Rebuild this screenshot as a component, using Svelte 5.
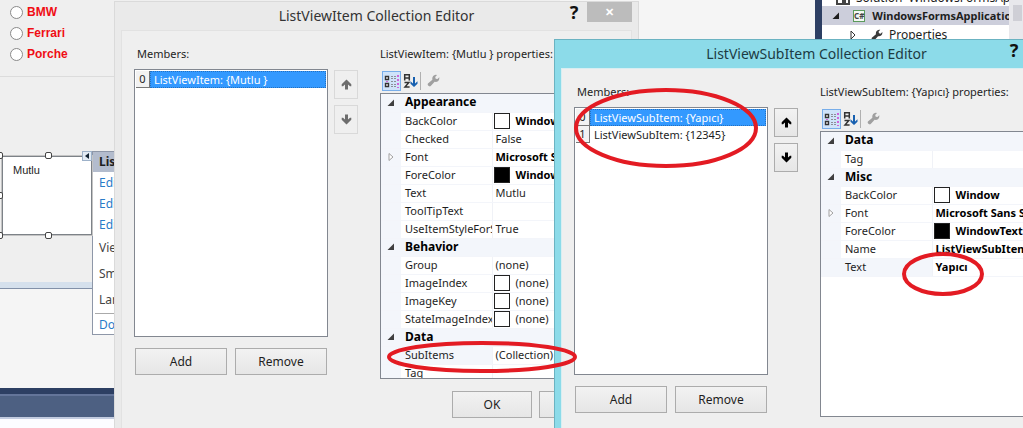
<script>
  let makes = ["BMW", "Ferrari", "Porche"];
  let make = $state("");

  let tasks = [
    { text: "Edit Items...", link: true },
    { text: "Edit Columns...", link: true },
    { text: "Edit Groups...", link: true },
    { text: "View:" },
    { text: "Small ImageList:" },
    { text: "Large ImageList:" },
  ];

  let handles = ["nw", "n", "w", "sw", "s"];

  let itemEditor = $state({
    id: "item",
    title: "ListViewItem Collection Editor",
    heading: "ListViewItem: {Mutlu } properties:",
    members: ["ListViewItem: {Mutlu }"],
    selected: 0,
    active: false,
    groups: [
      {
        name: "Appearance",
        rows: [
          { name: "BackColor", value: "Window", swatch: "white", bold: true },
          { name: "Checked", value: "False" },
          { name: "Font", value: "Microsoft Sans Serif", bold: true, expands: true },
          { name: "ForeColor", value: "WindowText", swatch: "black", bold: true },
          { name: "Text", value: "Mutlu" },
          { name: "ToolTipText", value: "" },
          { name: "UseItemStyleForSubItems", value: "True" },
        ],
      },
      {
        name: "Behavior",
        rows: [
          { name: "Group", value: "(none)" },
          { name: "ImageIndex", value: "(none)", swatch: "white" },
          { name: "ImageKey", value: "(none)", swatch: "white" },
          { name: "StateImageIndex", value: "(none)", swatch: "white" },
        ],
      },
      {
        name: "Data",
        rows: [
          { name: "SubItems", value: "(Collection)", current: true },
          { name: "Tag", value: "" },
        ],
      },
    ],
  });

  let subItemEditor = $state({
    id: "subitem",
    title: "ListViewSubItem Collection Editor",
    heading: "ListViewSubItem: {Yapıcı} properties:",
    members: ["ListViewSubItem: {Yapıcı}", "ListViewSubItem: {12345}"],
    selected: 0,
    active: true,
    groups: [
      { name: "Data", rows: [{ name: "Tag", value: "" }] },
      {
        name: "Misc",
        rows: [
          { name: "BackColor", value: "Window", swatch: "white", bold: true },
          { name: "Font", value: "Microsoft Sans Serif", bold: true, expands: true },
          { name: "ForeColor", value: "WindowText", swatch: "black", bold: true },
          { name: "Name", value: "ListViewSubItem", bold: true },
          { name: "Text", value: "Yapıcı", bold: true, current: true },
        ],
      },
    ],
  });
</script>

{#snippet wrench(size)}
  <svg class="wrench" width={size} height={size} viewBox="0 0 14 14" aria-hidden="true">
    <path d="M1 10.2 5.8 6.2C5.2 3.6 6.6 1.2 9.4 0.8L10.8 1 8.8 3.2 9.4 5.1 11.3 5.5 13.2 3.5C13.8 6.8 11.3 9 8.2 8.4L4 13C2.5 14.2 -0.2 12 1 10.2Z" />
  </svg>
{/snippet}

{#snippet arrow(down)}
  <svg class="arrow" class:down width="11" height="11" viewBox="0 0 11 11" aria-hidden="true">
    <path d="M5.5 0.5 10.3 5.3V7.2H9L7 5.4V10.5H4V5.4L2 7.2H0.7V5.3Z" />
  </svg>
{/snippet}

{#snippet editor(dlg)}
  <section class="dialog {dlg.id}" class:active={dlg.active} aria-label={dlg.title}>
    <header>
      <h2>{dlg.title}</h2>
      <div class="caption">
        <button class="help" aria-label="Help">?</button>
        <button class="close" aria-label="Close">✕</button>
      </div>
    </header>
    <div class="client">
      <div class="columns">
        <div class="left">
          <p class="members-label">Members:</p>
          <ul class="members">
            {#each dlg.members as member, i}
              <li>
                <span class="index">{i}</span>
                <button class:selected={dlg.selected === i} onclick={() => (dlg.selected = i)}>{member}</button>
              </li>
            {/each}
          </ul>
          <div class="actions">
            <button class="push">Add</button>
            <button class="push">Remove</button>
          </div>
        </div>
        <div class="order">
          <button class="push" aria-label="Move up" disabled={dlg.members.length < 2}>{@render arrow(false)}</button>
          <button class="push" aria-label="Move down" disabled={dlg.members.length < 2}>{@render arrow(true)}</button>
        </div>
        <div class="right">
          <p>{dlg.heading}</p>
          <div class="toolbar">
            <button class="pressed" aria-label="Categorized">
              <svg width="17" height="16" viewBox="0 0 17 16">
                <path d="M2.5 3.5h3v3h-3zM2.5 10.5h3v3h-3z" fill="#fff" stroke="#333" stroke-width="1.4" />
                <path d="M8 3.5h2M11 3.5h2M8 5.5h2M11 5.5h2M8 8.5h2M11 8.5h2M8 11.5h2M11 11.5h2M8 13.5h2M11 13.5h2" stroke="#8d8d98" />
                <path d="M15 2v13M4 8v1" stroke="#d13bd0" stroke-width="1.5" stroke-dasharray="2 2" />
              </svg>
            </button>
            <button aria-label="Alphabetical">
              <svg width="15" height="16" viewBox="0 0 15 16">
                <path d="M1.7 7.5V1.7h4.6v5.8M2 5h4" fill="none" stroke="#333" stroke-width="1.5" />
                <path d="M1.5 9.5h4.3L2 14h4.6" fill="none" stroke="#333" stroke-width="1.5" />
                <path d="M11 4v8" stroke="#1760b0" stroke-width="2" />
                <path d="M7.5 8.3v2.5L11 14l3.5-3.2V8.3L11 11.5z" fill="#1760b0" />
              </svg>
            </button>
            <span class="rule"></span>
            <button aria-label="Property pages" disabled>{@render wrench(13)}</button>
          </div>
          <div class="grid">
            <table aria-label={dlg.heading}>
              <colgroup>
                <col class="gutter-col" />
                <col class="name-col" />
                <col />
              </colgroup>
              {#each dlg.groups as group}
                <tbody>
                  <tr class="group">
                    <td class="gutter"><svg width="8" height="8" viewBox="0 0 8 8"><path d="M7 0.5V7H0.5Z" fill="#404040" /></svg></td>
                    <th colspan="2" scope="rowgroup">{group.name}</th>
                  </tr>
                  {#each group.rows as row}
                    <tr class:current={row.current}>
                      <td class="gutter">
                        {#if row.expands}
                          <svg width="8" height="8" viewBox="0 0 8 8"><path d="M2 0.5 6 4 2 7.5Z" fill="#fff" stroke="#a0a0a0" /></svg>
                        {/if}
                      </td>
                      <td class="name">{row.name}</td>
                      <td class="value" class:bold={row.bold}>
                        {#if row.swatch}<i class="swatch {row.swatch}"></i>{/if}{row.value}
                      </td>
                    </tr>
                  {/each}
                </tbody>
              {/each}
            </table>
          </div>
        </div>
      </div>
      <footer>
        <button class="push">OK</button>
        <button class="push">Cancel</button>
      </footer>
    </div>
  </section>
{/snippet}

<main>
  <div class="ide">
    <div class="document">
      <div class="form">
        <fieldset>
          {#each makes as name}
            <label><input type="radio" name="make" value={name} bind:group={make} />{name}</label>
          {/each}
        </fieldset>
        <div class="design">
          <div class="listview">
            Mutlu
            {#each handles as h}<i class="handle {h}"></i>{/each}
            <button class="smart-tag" aria-label="ListView Tasks">
              <svg width="8" height="8" viewBox="0 0 8 8"><path d="M6 1v6L2 4z" fill="#123" /></svg>
            </button>
          </div>
          <div class="tasks">
            <h3>ListView Tasks</h3>
            {#each tasks as task}
              {#if task.link}
                <a href="#tasks">{task.text}</a>
              {:else}
                <span>{task.text}</span>
              {/if}
            {/each}
            <a class="dock" href="#dock">Dock in Parent Container</a>
          </div>
        </div>
      </div>
      <div class="tray"></div>
      <div class="output-bar"></div>
      <div class="output"></div>
    </div>
    <aside>
      <div class="tree">
        <div class="node solution">
          <svg width="14" height="12" viewBox="0 0 14 12"><path d="M1 3h6v7H1zM9 5h4v5H9z" fill="none" stroke="#444" stroke-width="2" /></svg>
          Solution 'WindowsFormsApplication1'
        </div>
        <div class="node project">
          <svg width="8" height="8" viewBox="0 0 8 8"><path d="M7 0.5V7H0.5Z" fill="#1e1e1e" /></svg>
          <span class="cs">C#</span>
          WindowsFormsApplication1
        </div>
        <div class="node properties">
          <svg width="8" height="10" viewBox="0 0 8 10"><path d="M2 1 6 5 2 9Z" fill="#fff" stroke="#333" /></svg>
          {@render wrench(12)}
          Properties
        </div>
      </div>
      <div class="scrollbar"><i></i></div>
    </aside>
  </div>

  {@render editor(itemEditor)}
  {@render editor(subItemEditor)}

  <svg class="marks" aria-hidden="true">
    <ellipse cx="666" cy="128" rx="90" ry="38" />
    <ellipse cx="482" cy="357" rx="93" ry="14" />
    <ellipse cx="943" cy="274" rx="39" ry="20" />
  </svg>
</main>

<style>
  :global(body) {
    margin: 0;
  }

  * {
    box-sizing: border-box;
  }

  main {
    position: relative;
    height: 100vh;
    overflow: hidden;
    font: 11px/16px "Noto Sans", "Open Sans", sans-serif;
    color: #1e1e1e;
  }

  button {
    font: inherit;
    color: inherit;
    padding: 0;
    border: 0;
    background: none;
  }

  p,
  h2,
  h3,
  ul {
    margin: 0;
    padding: 0;
    font-weight: normal;
  }

  svg {
    display: block;
    flex: none;
  }

  /* Visual Studio behind the dialogs */
  .ide {
    display: flex;
    height: 100%;
    background: #f5f5f5;
  }

  .document {
    flex: 1;
    min-width: 0;
    display: flex;
    flex-direction: column;
  }

  .form {
    width: 560px;
    height: 289px;
    background: #efefef;
    border-bottom: 1px solid #8290a8;
    box-shadow: inset 0 -6px #d5e0ec;
  }

  fieldset {
    display: flex;
    flex-direction: column;
    gap: 5px;
    height: 77px;
    margin: 0;
    padding: 4px 10px 0;
    border: 0;
    border-bottom: 1px solid #dcdcdc;
  }

  fieldset label {
    display: flex;
    align-items: center;
    gap: 4px;
    font: bold 12px/16px "Liberation Sans", Arial, sans-serif;
    color: #f00d14;
  }

  fieldset input {
    appearance: none;
    width: 13px;
    height: 13px;
    margin: 0;
    border: 1px solid #8a8a8a;
    border-radius: 50%;
    background: #fff;
  }

  fieldset input:checked {
    background: radial-gradient(#222 3px, #fff 4px);
  }

  .design {
    display: flex;
    align-items: flex-start;
    padding-top: 74px;
  }

  .listview {
    position: relative;
    width: 90px;
    height: 79px;
    margin: 5px 0 0 2px;
    padding: 5px 10px;
    background: #fff;
    border: 1px solid #7d8288;
    outline: 1px solid #c4c4c4;
    font: 11px/16px "Liberation Sans", Arial, sans-serif;
  }

  .handle {
    position: absolute;
    width: 7px;
    height: 7px;
    border: 1px solid #444;
    border-radius: 2px;
    background: #fff;
  }

  .nw { left: -7px; top: -5px; }
  .n { left: 42px; top: -5px; }
  .w { left: -7px; top: 35px; }
  .sw { left: -7px; bottom: -5px; }
  .s { left: 42px; bottom: -5px; }

  .smart-tag {
    position: absolute;
    right: -1px;
    top: -6px;
    border: 1px solid #9db1c9;
    background: #e2ebf5;
  }

  .tasks {
    display: flex;
    flex-direction: column;
    width: 180px;
    height: 184px;
    background: #fff;
    border: 1px solid #8e97a8;
    font-size: 12px;
    line-height: 21px;
  }

  .tasks h3 {
    padding-left: 6px;
    background: #b3bccd;
    font-size: 12px;
    line-height: 20px;
    font-weight: bold;
  }

  .tasks a,
  .tasks span {
    padding-left: 6px;
    color: #2a7bc8;
    text-decoration: none;
  }

  .tasks span {
    line-height: 26px;
    color: #444;
  }

  .tasks .dock {
    margin-left: 2px;
    padding-left: 4px;
    border-top: 1px solid #aaa;
  }

  .tray {
    height: 99px;
  }

  .output-bar {
    height: 31px;
    background: #4d6082;
    border-top: 6px solid #2d3f63;
    border-bottom: 2px solid #c3cce0;
    box-shadow: inset 0 2px #64759a;
  }

  .output {
    flex: 1;
    background: #fcfcff;
  }

  aside {
    display: flex;
    width: 208px;
    border-left: 7px solid #2d3f63;
    background: #fff;
  }

  .tree {
    flex: 1;
    min-width: 0;
    overflow: hidden;
  }

  .node {
    display: flex;
    align-items: center;
    height: 19px;
    white-space: nowrap;
    font-size: 12px;
  }

  .solution {
    gap: 6px;
    height: 6px;
    padding-left: 14px;
    align-items: flex-end;
  }

  .project {
    gap: 13px;
    padding-left: 10px;
    background: #cccedb;
    font-weight: bold;
    font-size: 11px;
  }

  .cs {
    width: 14px;
    margin-right: -6px;
    border: 1px solid #5b9a5b;
    background: #f4f8f4;
    font-size: 8px;
    line-height: 10px;
    text-align: center;
    color: #444;
  }

  .properties {
    gap: 6px;
    padding-left: 27px;
  }

  .properties .wrench {
    margin-left: 8px;
    fill: #3a3a3a;
  }

  .scrollbar {
    width: 14px;
    padding: 5px 1px 0 4px;
    background: #e8e8ec;
  }

  .scrollbar i {
    display: block;
    height: 16px;
    background: #cfcfd6;
  }

  /* dialogs */
  .dialog {
    position: absolute;
    display: flex;
    flex-direction: column;
    width: 525px;
    height: 460px;
    padding: 0 6px 6px;
    background: #eaeaea;
    border: 1px solid #dadada;
  }

  .item {
    left: 114px;
    top: 1px;
  }

  .subitem {
    left: 554px;
    top: 39px;
  }

  .active {
    background: #8cdbe9;
    border-color: #6bb3c2;
  }

  header {
    position: relative;
    height: 28px;
    flex: none;
  }

  h2 {
    font-size: 14px;
    line-height: 28px;
    text-align: center;
    color: #333;
  }

  .active h2 {
    color: #1c3c44;
  }

  .caption {
    position: absolute;
    right: 0;
    top: 0;
    display: flex;
    gap: 7px;
  }

  .help {
    width: 12px;
    font-size: 18px;
    line-height: 21px;
    font-weight: bold;
    color: #111;
  }

  .close {
    width: 45px;
    height: 20px;
    background: #bcbcbc;
    color: #fff;
    font-size: 11px;
    font-weight: bold;
  }

  .client {
    flex: 1;
    padding: 15px 12px;
    background: #efefef;
    border: 1px solid #e2e2e2;
  }

  .active .client {
    border-color: #d8eef2;
  }

  .columns {
    display: flex;
  }

  .left {
    width: 194px;
  }

  .members-label {
    padding-left: 3px;
  }

  .members {
    height: 268px;
    margin: 7px 0 11px;
    padding: 1px;
    list-style: none;
    background: #fff;
    border: 1px solid #828790;
  }

  .members li {
    display: flex;
    height: 17px;
    line-height: 16px;
  }

  .index {
    width: 14px;
    text-align: center;
    border: 1px solid #777;
    border-width: 0 1px 1px 0;
    background: #f2f2f2;
  }

  .members button {
    flex: 1;
    padding-left: 4px;
    text-align: left;
  }

  .members .selected {
    background: #3399ff;
    color: #fff;
    outline: 1px dotted #2470c0;
    outline-offset: -1px;
  }

  .actions {
    display: flex;
    gap: 8px;
    padding: 0 1px;
  }

  .push {
    height: 27px;
    background: linear-gradient(#f2f2f2, #e6e6e6);
    border: 1px solid #acacac;
    font-size: 12px;
  }

  .actions .push {
    flex: 1;
  }

  .order {
    display: flex;
    flex-direction: column;
    gap: 6px;
    padding: 24px 22px 0 6px;
  }

  .order .push {
    display: grid;
    place-items: center;
    width: 24px;
    height: 29px;
  }

  .order .push:disabled {
    background: #efefef;
    border-color: #d9d9d9;
  }

  .arrow {
    fill: #000;
  }

  .down {
    transform: rotate(180deg);
  }

  :disabled .arrow {
    fill: #6d6d6d;
  }

  .right {
    flex: 1;
    min-width: 0;
  }

  .toolbar {
    display: flex;
    align-items: center;
    height: 31px;
    padding: 8px 0 2px 2px;
  }

  .toolbar button {
    display: grid;
    place-items: center;
    height: 20px;
    padding: 0 2px;
  }

  .toolbar .pressed {
    padding: 0;
    background: #cfe3fa;
    border: 1px solid #78aeea;
  }

  .toolbar .rule {
    width: 1px;
    height: 18px;
    margin: 0 4px 0 0;
    background: #b0b0b0;
  }

  .toolbar .wrench {
    fill: #a0a0a0;
  }

  .grid {
    height: 286px;
    overflow: hidden;
    background: #fff;
    border: 1px solid #828790;
  }

  table {
    width: 100%;
    table-layout: fixed;
    border-collapse: collapse;
  }

  .gutter-col {
    width: 20px;
  }

  .name-col {
    width: 91px;
  }

  td,
  th {
    height: 18px;
    padding: 0 0 0 4px;
    line-height: 16px;
    text-align: left;
    vertical-align: top;
    white-space: nowrap;
    overflow: hidden;
    border-bottom: 1px solid #f3f5fa;
  }

  th {
    font-size: 12px;
    color: #000;
  }

  .gutter {
    padding-left: 6px;
    vertical-align: middle;
  }

  .gutter,
  .group,
  .current .name {
    background: #f3f6fb;
  }

  .name {
    border-right: 1px solid #f0f2f7;
  }

  .value {
    padding-left: 3px;
  }

  .bold {
    font-weight: bold;
    color: #000;
  }

  .swatch {
    display: inline-block;
    width: 16px;
    height: 16px;
    margin: 0 6px 0 -2px;
    border: 1px solid #222;
    vertical-align: top;
  }

  .white {
    background: #fff;
  }

  .black {
    background: #000;
  }

  footer {
    display: flex;
    justify-content: flex-end;
    gap: 7px;
    padding-top: 12px;
  }

  footer .push {
    width: 80px;
  }

  .marks {
    position: absolute;
    inset: 0;
    width: 100%;
    height: 100%;
    pointer-events: none;
  }

  .marks ellipse {
    fill: none;
    stroke: #e31b23;
    stroke-width: 4;
  }
</style>
